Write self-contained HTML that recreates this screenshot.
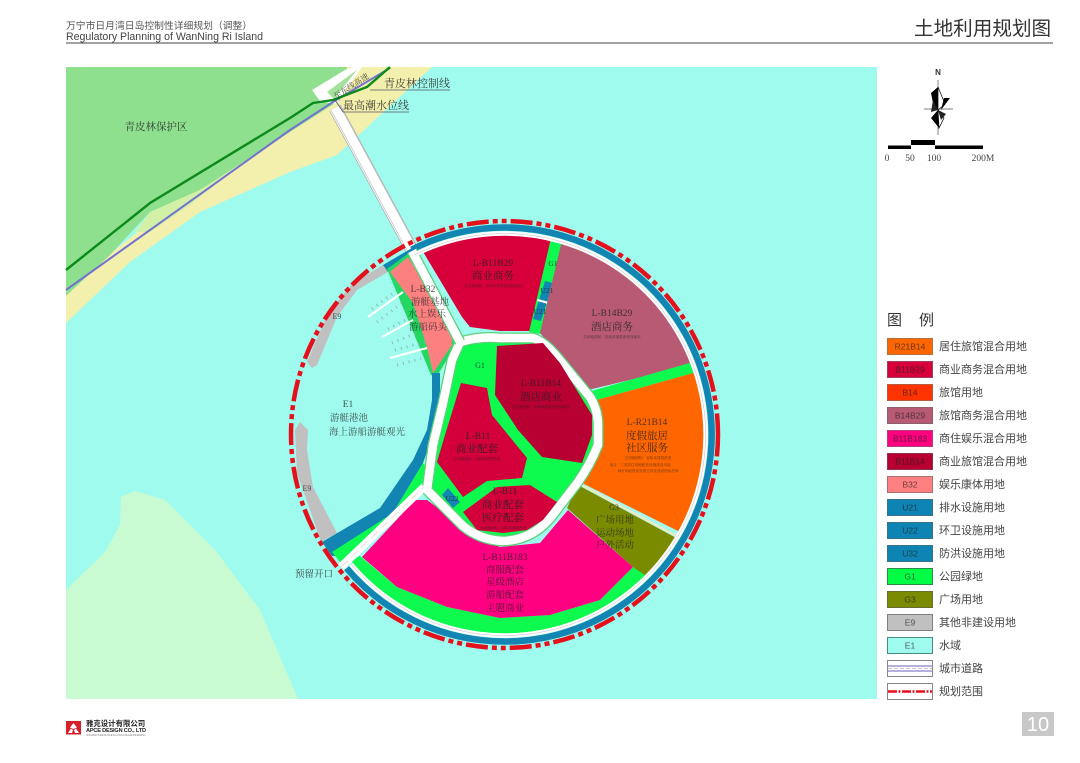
<!DOCTYPE html>
<html lang="zh"><head><meta charset="utf-8"><title>土地利用规划图</title>
<style>
html,body{margin:0;padding:0;background:#fff}
body{width:1080px;height:763px;overflow:hidden}
svg{display:block;filter:blur(.35px)}
.s{font-family:"Liberation Sans","Noto Sans CJK SC",sans-serif}
.m text{font-family:"Liberation Serif","Noto Serif CJK SC",serif;text-anchor:middle;fill:#222;opacity:.78;font-size:9.5px}
.m text.t{font-size:10.5px;opacity:.85}
.m text.x{font-size:3.6px;opacity:.7}
.lg text{font-family:"Liberation Sans","Noto Sans CJK SC",sans-serif;font-size:11px;fill:#444}
.lg text.c{font-size:8.5px;text-anchor:middle;fill:#222;opacity:.7}
</style></head><body>
<svg width="1080" height="763" viewBox="0 0 1080 763" xmlns="http://www.w3.org/2000/svg">
<defs><clipPath id="cp"><circle cx="504.5" cy="434.5" r="199"/></clipPath></defs>
<rect width="1080" height="763" fill="#fff"/>
<!-- header -->
<text class="s" x="66" y="29" font-size="9.8" fill="#555">万宁市日月湾日岛控制性详细规划（调整）</text>
<text class="s" x="66" y="40" font-size="10.6" fill="#444" textLength="197">Regulatory Planning of WanNing Ri Island</text>
<rect x="66" y="42.5" width="987" height="1" fill="#444"/>
<text class="s" x="914" y="35" font-size="19.6" fill="#333">土地利用规划图</text>

<!-- map -->
<rect x="66" y="67" width="811" height="632" fill="#a0fbef"/>
<path d="M66,699V590L105,552 120,525 121,497 135,491 165,500 215,550 260,610 298,699Z" fill="#c9fbd3"/>
<path d="M340,67H432L337,155 290,172 200,212 130,262 66,323V290Z" fill="#f3efac"/>
<path d="M66,67H347L340,100 290,132 200,190 150,212 110,255 66,296Z" fill="#8fe08e"/>
<path d="M150,212 200,190 240,165 190,205 150,232 135,232Z" fill="#d2f0a6"/>
<!-- expressway stub -->
<path d="M312,90 345,70 353,67 362,67 336,104 320,101Z" fill="#fff"/>
<path d="M327,92 350,75 357,70 334,99Z" fill="#a2e29a"/>
<!-- causeway -->
<path d="M335,108 412,250" stroke="#aaa" stroke-width="13" fill="none"/>
<path d="M335,108 412,250" stroke="#fff" stroke-width="11.5" fill="none"/>
<path d="M339,104 416,246M331,110 408,252" stroke="#bbb" stroke-width=".7" fill="none"/>
<path d="M66,290 290,130 333,102 390,68" fill="none" stroke="#7472cf" stroke-width="2"/>
<path d="M66,270 150,203 290,118 313,103 333,100 367,87 390,67" fill="none" stroke="#0c8a1c" stroke-width="2.4"/>

<!-- E9 grey -->
<path d="M383,265 388,272 357,290 337,317 317,365 312,368 307,362 328,313 353,283Z" fill="#c0c0c0"/>
<path d="M300,422 308,430 307,450 313,487 337,533 321,542 310,510 297,473 295,430Z" fill="#c0c0c0"/>
<!-- blue ring & boundary -->
<path d="M411.6,249.6A207,207 0 1 1 346.6,568.2" fill="none" stroke="#1285b2" stroke-width="6.5"/>
<circle cx="504.5" cy="434.5" r="213.5" fill="none" stroke="#e4101c" stroke-width="4.5" stroke-dasharray="22 4 5 4 5 4"/>
<!-- blue wedge upper-left -->
<path d="M383,265 412,248 416,258 388,272Z" fill="#1285b2"/>
<path d="M388,270 408,256 414,262 392,274Z" fill="#11f24f"/>
<!-- B32 -->
<path d="M387,269 409,253 418,253 456,325 456,345 437,376 431,375Z" fill="#22d860"/>
<path d="M390,272 408,257 452,328 452,345 433,373 427,347 413,303Z" fill="#fc8080"/>
<!-- U32 inner lagoon band -->
<path d="M432,373H440L440,410 435,430 423,463 393,513 345,555 332,556 322,542 380,508 413,460 427,430 432,400Z" fill="#1285b2"/>
<path d="M332,552 393,513 423,463 430,470 420,487 340,562Z" fill="#0dfb4e"/>

<g clip-path="url(#cp)">
<!-- top block -->
<path d="M422,250 460,235 500,225 553,230 530,331 500,331 470,327 462,317Z" fill="#d8003a"/>
<path d="M553,230 566,232 541,334 529,332Z" fill="#0dfb4e"/>
<path d="M545,281 553,283 541,321 533,319Z" fill="#1285b2"/>
<path d="M538,299 549,302 548,304 537,301Z" fill="#fff"/>
<!-- mauve -->
<path d="M564,232 630,240 680,300 700,363 588,390 557,353 540,333Z" fill="#b85a74"/>
<!-- green stripe -->
<path d="M588,392 700,360 704,370 593,401Z" fill="#0dfb4e"/>
<!-- orange -->
<path d="M593,401 704,370 710,413 710,470 690,537 582,483 597,460 602,447 602,430 597,407Z" fill="#ff6600"/>
<!-- olive -->
<path d="M578,485 680,540 650,580 633,567 567,508Z" fill="#7a8b00"/>
<path d="M578,483 680,538" stroke="#f7e7be" stroke-width="2"/>
<!-- pink + green band -->
<path d="M345,560 360,556 397,587 447,607 500,618 550,615 600,600 633,567 652,580 600,625 550,640 500,640 450,635 400,615 370,595Z" fill="#0dfb4e"/>
<path d="M362,557 415,500 427,500 477,537 500,547 540,543 568,510 633,567 600,600 550,615 500,618 447,607 397,587Z" fill="#ff0080"/>
</g>

<!-- core -->
<path d="M460,342Q480,336 500,338L533,338Q545,342 558,358L590,397Q598,410 598,425L598,445Q590,465 578,482L555,512Q535,540 503,541Q480,540 463,526L427,490 433,445 443,403 452,360Z" fill="#0dfb4e" stroke="#5ad07a" stroke-width="11" stroke-linejoin="round"/>
<path d="M460,342Q480,336 500,338L533,338Q545,342 558,358L590,397Q598,410 598,425L598,445Q590,465 578,482L555,512Q535,540 503,541Q480,540 463,526L427,490 433,445 443,403 452,360Z" fill="none" stroke="#fff" stroke-width="8.5" stroke-linejoin="round"/>
<path d="M497,346 543,343 560,363 592,415 592,435 582,463 542,457 518,430 495,395Z" fill="#b80033"/>
<path d="M461,383 487,388 492,415 527,458 522,478 487,481 463,497 437,462 445,435Z" fill="#d3003c"/>
<path d="M463,512 497,487 530,485 557,502 543,520 527,530 503,533 477,530Z" fill="#d3003c"/>
<path d="M442,495 448,488 460,502 453,508Z" fill="#1285b2"/>

<!-- roads -->
<path d="M412,251 460,342" stroke="#5ad07a" stroke-width="11" fill="none"/>
<path d="M412,251 460,342" stroke="#fff" stroke-width="8.5" fill="none"/>
<path d="M341,567 424,487" stroke="#fff" stroke-width="8" fill="none"/>
<path d="M341,567 424,487" stroke="#e8c8b8" stroke-width=".6" stroke-dasharray="9 5" fill="none"/>
<path d="M414.2,255A201,201 0 1 1 351.1,564.3" fill="none" stroke="#fff" stroke-width="4.5"/>
<path d="M414.2,255A201,201 0 1 1 351.1,564.3" fill="none" stroke="#c8b8c8" stroke-width=".5"/>

<!-- piers -->
<g fill="none">
<path d="M368,317 403,292M382,337 413,320M390,358 427,348" stroke="#fff" stroke-width="2"/>
<path d="M372,309 396,291 M377,322 402,303 M388,329 413,316 M392,343 419,332 M395,350 425,342 M397,365 424,358" stroke="#8aa" stroke-width="3" stroke-dasharray="1 5" opacity=".8"/>
</g>

<g class="m">
<text class="t" x="156" y="130">青皮林保护区</text>
<text x="351" y="89" font-size="8" transform="rotate(-33 351 86)" style="font-size:8px">至东线高速</text>
<text class="t" x="417" y="87" style="font-size:11px">青皮林控制线</text>
<text class="t" x="376" y="109" style="font-size:11px">最高潮水位线</text>
<text x="493" y="266">L-B11B29</text><text class="t" x="493" y="279">商业商务</text><text class="x" x="493" y="287">总用地面积：容积率建筑密度绿地率</text>
<text x="423" y="292">L-B32</text><text x="430" y="305">游艇基地</text><text x="427" y="317">水上娱乐</text><text x="428" y="330">游船码头</text>
<text x="337" y="319" style="font-size:8px">E9</text><text x="307" y="491" style="font-size:8px">E9</text>
<text x="348" y="407">E1</text><text x="349" y="421">游艇港池</text><text x="367" y="435">海上游船游艇观光</text>
<text x="480" y="368" style="font-size:8px">G1</text>
<text x="553" y="266" style="font-size:7.5px">G1</text><text x="547" y="293" style="font-size:7.5px">U21</text><text x="540" y="314" style="font-size:7.5px">U21</text>
<text x="541" y="386">L-B11B14</text><text class="t" x="541" y="400">酒店商业</text><text class="x" x="541" y="408">总用地面积：容积率建筑密度绿地率</text>
<text x="478" y="439">L-B11</text><text class="t" x="477" y="452">商业配套</text><text class="x" x="477" y="460">总用地面积：容积率建筑密度</text>
<text x="505" y="494">L-B11</text><text class="t" x="503" y="508">商业配套</text><text class="t" x="503" y="521">医疗配套</text><text class="x" x="503" y="529">总用地面积：容积率建筑密度</text>
<text x="452" y="501" style="font-size:7.5px">U22</text>
<text x="612" y="316">L-B14B29</text><text class="t" x="612" y="330">酒店商务</text><text class="x" x="612" y="338">总用地面积：容积率建筑密度绿地率</text>
<text x="647" y="425">L-R21B14</text><text class="t" x="647" y="439">度假旅居</text><text class="t" x="647" y="451">社区服务</text>
<text class="x" x="648" y="459">总用地面积：容积率建筑密度</text><text class="x" x="640" y="466">备注：三类居住用地配套设施建设用地</text><text class="x" x="648" y="472">城市用地建设发展方向及建设指标控制</text>
<text x="614" y="510" style="font-size:8px">G3</text><text x="615" y="523">广场用地</text><text x="615" y="536">运动场地</text><text x="615" y="548">户外活动</text>
<text x="505" y="560">L-B11B183</text><text x="505" y="573">商服配套</text><text x="505" y="585">星级酒店</text><text x="505" y="598">游船配套</text><text x="505" y="611">主题商业</text>
<text class="t" x="314" y="577" style="font-size:9.5px">预留开口</text>
</g>
<path d="M370,90H450M335,100 343,112H409" fill="none" stroke="#556" stroke-width=".8"/>

<!-- compass -->
<text class="s" x="938" y="75" font-size="8" font-weight="bold" text-anchor="middle" fill="#333">N</text>
<path d="M938,80V135M924,109H953" stroke="#555" stroke-width=".7"/>
<path d="M931,93 938,87 938,110 934,108Z" fill="#000"/>
<path d="M938,87 945,104 938,110Z" fill="#fff" stroke="#000" stroke-width=".7"/>
<path d="M944,98 950,98 941,110Z" fill="#000"/>
<path d="M931,118 938,110 939,128Z" fill="#000"/>
<path d="M938,110 944,118 939,128Z" fill="#fff" stroke="#000" stroke-width=".7"/>
<path d="M933,100 938,110 931,112ZM938,110 946,114 941,120Z" fill="#222"/>
<!-- scale -->
<path d="M888,145.5H911V149H888ZM911,140H935V145H911ZM935,145.5H983V149H935Z" fill="#000"/>
<g font-family="Liberation Serif,serif" font-size="9.5" fill="#444" text-anchor="middle">
<text x="887" y="161">0</text><text x="910" y="161">50</text><text x="934" y="161">100</text><text x="983" y="161">200M</text></g>

<!-- legend -->
<g class="s" font-size="15" fill="#333"><text x="887" y="325">图</text><text x="919" y="325">例</text></g>
<g class="lg" stroke-width="1">
<rect x="887.5" y="338.5" width="45" height="16" fill="#ff6600" stroke="#b8703a"/><text class="c" x="910" y="349.5">R21B14</text><text x="939" y="350">居住旅馆混合用地</text>
<rect x="887.5" y="361.5" width="45" height="16" fill="#d8003a" stroke="#a04060"/><text class="c" x="910" y="372.5">B11B29</text><text x="939" y="373">商业商务混合用地</text>
<rect x="887.5" y="384.5" width="45" height="16" fill="#ff3300" stroke="#b85a40"/><text class="c" x="910" y="395.5">B14</text><text x="939" y="396">旅馆用地</text>
<rect x="887.5" y="407.5" width="45" height="16" fill="#b85a74" stroke="#8a6070"/><text class="c" x="910" y="418.5">B14B29</text><text x="939" y="419">旅馆商务混合用地</text>
<rect x="887.5" y="430.5" width="45" height="16" fill="#ff0080" stroke="#b04080"/><text class="c" x="910" y="441.5">B11B183</text><text x="939" y="442">商住娱乐混合用地</text>
<rect x="887.5" y="453.5" width="45" height="16" fill="#b80033" stroke="#903050"/><text class="c" x="910" y="464.5">B11B14</text><text x="939" y="465">商业旅馆混合用地</text>
<rect x="887.5" y="476.5" width="45" height="16" fill="#ff8080" stroke="#a87070"/><text class="c" x="910" y="487.5">B32</text><text x="939" y="488">娱乐康体用地</text>
<rect x="887.5" y="499.5" width="45" height="16" fill="#0d84b4" stroke="#3a7288"/><text class="c" x="910" y="510.5">U21</text><text x="939" y="511">排水设施用地</text>
<rect x="887.5" y="522.5" width="45" height="16" fill="#0d84b4" stroke="#3a7288"/><text class="c" x="910" y="533.5">U22</text><text x="939" y="534">环卫设施用地</text>
<rect x="887.5" y="545.5" width="45" height="16" fill="#0d84b4" stroke="#3a7288"/><text class="c" x="910" y="556.5">U32</text><text x="939" y="557">防洪设施用地</text>
<rect x="887.5" y="568.5" width="45" height="16" fill="#00ff44" stroke="#2e8a4a"/><text class="c" x="910" y="579.5">G1</text><text x="939" y="580">公园绿地</text>
<rect x="887.5" y="591.5" width="45" height="16" fill="#7a8b00" stroke="#66702e"/><text class="c" x="910" y="602.5">G3</text><text x="939" y="603">广场用地</text>
<rect x="887.5" y="614.5" width="45" height="16" fill="#c0c0c0" stroke="#808080"/><text class="c" x="910" y="625.5">E9</text><text x="939" y="626">其他非建设用地</text>
<rect x="887.5" y="637.5" width="45" height="16" fill="#a0fbef" stroke="#4a8a84"/><text class="c" x="910" y="648.5">E1</text><text x="939" y="649">水域</text>
<rect x="887.5" y="660.5" width="45" height="16" fill="#fff" stroke="#888"/><path d="M888,666H932M888,671H932" stroke="#8a80c8" stroke-width="1.2"/><path d="M888,668.5H932" stroke="#c8a8c8" stroke-width=".8" stroke-dasharray="4 2"/><text x="939" y="672">城市道路</text>
<rect x="887.5" y="683.5" width="45" height="16" fill="#fff" stroke="#888"/><path d="M888,691.5H932" stroke="#e4101c" stroke-width="2.6" stroke-dasharray="9 1.5 2 1.5"/><text x="939" y="695">规划范围</text>
</g>

<!-- logo -->
<rect x="66" y="721" width="15" height="13.5" fill="#d8202a"/>
<path d="M73.5,723 77,727.5 73.5,729 70,727.5ZM68,733 71,728.5 73,730 72,733ZM79,733 76,728.5 74,730 75,733Z" fill="#fff"/>
<text class="s" x="86" y="726" font-size="7.4" font-weight="bold" fill="#222">雅克设计有限公司</text>
<text class="s" x="86" y="732" font-size="5.6" font-weight="bold" fill="#222" textLength="60">APCE DESIGN CO., LTD</text>
<text class="s" x="86" y="736" font-size="3" fill="#999" textLength="60">ARCHITECTURE PLANNING CONSULTING ENGINEERING</text>
<!-- page number -->
<rect x="1022" y="712" width="32" height="24" fill="#c8c8c8"/>
<text class="s" x="1038" y="731" font-size="20" fill="#fff" text-anchor="middle">10</text>
</svg>
</body></html>
